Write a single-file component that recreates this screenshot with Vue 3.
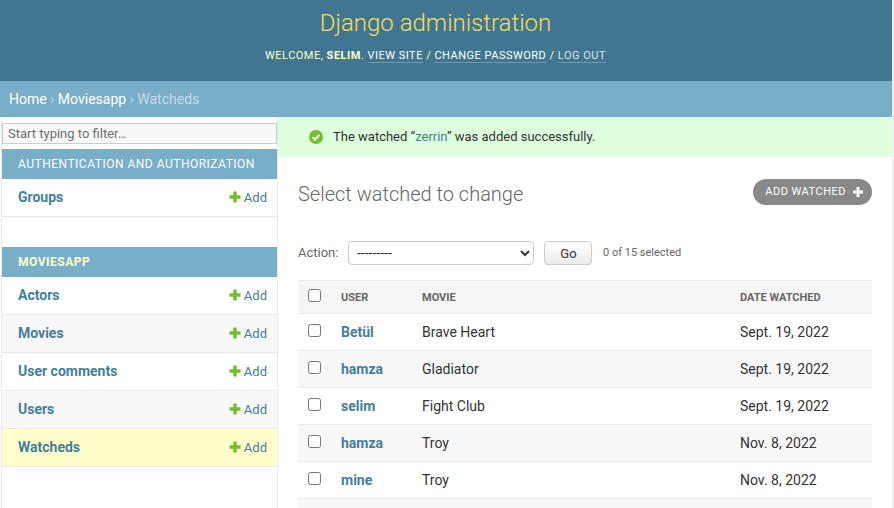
<script setup>
const appsA = ['Groups']
const appsB = ['Actors', 'Movies', 'User comments', 'Users', 'Watcheds']
const rows = [
  { user: 'Betül', movie: 'Brave Heart', date: 'Sept. 19, 2022' },
  { user: 'hamza', movie: 'Gladiator', date: 'Sept. 19, 2022' },
  { user: 'selim', movie: 'Fight Club', date: 'Sept. 19, 2022' },
  { user: 'hamza', movie: 'Troy', date: 'Nov. 8, 2022' },
  { user: 'mine', movie: 'Troy', date: 'Nov. 8, 2022' }
]
</script>

<template>
  <div class="page">
    <header class="header">
      <h1 class="brand">Django administration</h1>
      <div class="tools">
        WELCOME, <strong>SELIM</strong>.
        <a class="tool">VIEW SITE</a> /
        <a class="tool">CHANGE PASSWORD</a> /
        <a class="tool dim">LOG OUT</a>
      </div>
    </header>
    <nav class="crumbs">
      <a>Home</a><span class="sep"> › </span><a>Moviesapp</a><span class="sep"> › </span><span class="here">Watcheds</span>
    </nav>
    <div class="body">
      <aside class="side">
        <input class="filter" placeholder="Start typing to filter…" />
        <div class="caption">AUTHENTICATION AND AUTHORIZATION</div>
        <div v-for="a in appsA" :key="a" class="app">
          <a class="app-name">{{ a }}</a>
          <a class="add">
            <svg class="plus" viewBox="0 0 12 12"><path d="M4.300 0.500h3.400v3.800h3.800v3.400H7.700v3.800H4.300V7.700H0.500V4.300h3.800z" fill="#70bf2b" /></svg>Add
          </a>
        </div>
        <div class="caption second"><strong>MOVIESAPP</strong></div>
        <div
          v-for="(a, i) in appsB"
          :key="a"
          class="app"
          :class="{ even: i % 2 === 1, current: a === 'Watcheds' }"
        >
          <a class="app-name">{{ a }}</a>
          <a class="add">
            <svg class="plus" viewBox="0 0 12 12"><path d="M4.300 0.500h3.400v3.800h3.800v3.400H7.700v3.800H4.300V7.700H0.500V4.300h3.800z" fill="#70bf2b" /></svg>Add
          </a>
        </div>
      </aside>
      <main class="main">
        <div class="message">
          <svg class="ok" viewBox="0 0 14 14">
            <circle cx="7" cy="7" r="7" fill="#70bf2b" />
            <path d="M3.600 7.200l2.400 2.400 4.400-4.600" fill="none" stroke="#fff" stroke-width="2" />
          </svg>
          <span>The watched “<a class="msg-link">zerrin</a>” was added successfully.</span>
        </div>
        <section class="content">
          <div class="title-row">
            <h2 class="title">Select watched to change</h2>
            <a class="add-btn">ADD WATCHED
              <svg class="btn-plus" viewBox="0 0 12 12"><path d="M4.500 1h3v3.500h3.500v3H7.500v3.500h-3V7.500H1v-3h3.500z" fill="#fff" /></svg>
            </a>
          </div>
          <div class="actions">
            <label class="action-label">Action:</label>
            <select class="action-select"><option>---------</option></select>
            <button class="go">Go</button>
            <span class="count">0 of 15 selected</span>
          </div>
          <table class="table">
            <thead>
              <tr>
                <th class="c-check"><input type="checkbox" class="check" /></th>
                <th class="c-user">USER</th>
                <th class="c-movie">MOVIE</th>
                <th>DATE WATCHED</th>
              </tr>
            </thead>
            <tbody>
              <tr v-for="(r, i) in rows" :key="i" :class="{ even: i % 2 === 1 }">
                <td class="c-check"><input type="checkbox" class="check" /></td>
                <td class="c-user"><a class="user">{{ r.user }}</a></td>
                <td class="c-movie">{{ r.movie }}</td>
                <td>{{ r.date }}</td>
              </tr>
              <tr class="even"><td colspan="4"></td></tr>
            </tbody>
          </table>
        </section>
      </main>
    </div>
  </div>
</template>

<style>
html, body { margin: 0; overflow: hidden; background: #fff; }
</style>

<style scoped>
.page {
  width: 894px;
  height: 508px;
  box-sizing: border-box;
  border-right: 2px solid #eee;
  overflow: hidden;
  font-family: Roboto, "Liberation Sans", sans-serif;
  font-size: 14px;
  color: #333;
  background: #fff;
}
.header {
  height: 81px;
  box-sizing: border-box;
  background: #417690;
  color: #ffc;
  text-align: center;
  padding: 9px 21px 0 0;
}
.brand {
  margin: 0;
  font-size: 24px;
  line-height: 28px;
  font-weight: 300;
  color: #f5dd5d;
}
.tools {
  margin-top: 10px;
  font-size: 11px;
  line-height: 17px;
  letter-spacing: 0.5px;
  font-weight: 400;
}
.tools strong { font-weight: 700; }
.tool {
  color: #fff;
  border-bottom: 1px solid rgba(255, 255, 255, 0.25);
}
.tool.dim { color: #d6e4ec; }
.crumbs {
  height: 36px;
  box-sizing: border-box;
  padding: 10px 9px;
  line-height: 16px;
  background: #79aec8;
  color: #c4dce8;
  white-space: pre;
}
.crumbs a { color: #fff; }
.here { color: #c4dce8; }
.sep { color: #c4dce8; }
.body {
  display: grid;
  grid-template-columns: 278px 1fr;
  height: 391px;
}
.side {
  box-sizing: border-box;
  margin-left: 1px;
  padding-top: 6px;
  border-left: 1px solid #eaeaea;
  border-right: 1px solid #eaeaea;
}
.filter {
  display: block;
  box-sizing: border-box;
  width: 275px;
  height: 21px;
  margin: 0 0 5px;
  padding: 2px 5px;
  font: 13px Roboto, sans-serif;
  color: #333;
  background: #f8f8f8;
  border: 1px solid #ccc;
  outline: 0;
}
.filter::placeholder { color: #6f6f6f; opacity: 1; }
.caption {
  height: 30px;
  box-sizing: border-box;
  padding: 0 16px;
  line-height: 30px;
  font-size: 12px;
  letter-spacing: 0.5px;
  color: #fff;
  background: #79aec8;
}
.caption.second { margin-top: 30px; color: #ffc; }
.app {
  display: flex;
  justify-content: space-between;
  align-items: center;
  height: 38px;
  box-sizing: border-box;
  padding: 0 10px 2px 16px;
  background: #fff;
  border-bottom: 1px solid #eaeaea;
}
.app.even { background: #f8f8f8; }
.app.current { background: #ffc; }
.app-name {
  font-weight: 700;
  color: #447e9b;
}
.add {
  display: flex;
  align-items: center;
  padding-top: 2px;
  font-size: 13px;
  color: #447e9b;
}
.plus { width: 12px; height: 12px; margin: -2px 3px 0 0; }
.main { min-width: 0; }
.message {
  display: flex;
  align-items: center;
  height: 40px;
  box-sizing: border-box;
  padding: 0 0 1px 31px;
  background: #dfd;
  font-size: 13px;
}
.ok { width: 14px; height: 14px; margin-right: 10px; }
.msg-link { color: #447e9b; }
.content { padding: 22px 20px 0; }
.title-row {
  display: flex;
  justify-content: space-between;
  align-items: flex-start;
}
.title {
  margin: 0;
  font-size: 20px;
  line-height: 30px;
  font-weight: 300;
  color: #666;
}
.add-btn {
  display: flex;
  align-items: center;
  height: 26px;
  box-sizing: border-box;
  padding: 0 8px 2px 12px;
  border-radius: 15px;
  background: #888;
  color: #fff;
  font-size: 11px;
  letter-spacing: 0.5px;
  white-space: nowrap;
}
.btn-plus { width: 12px; height: 12px; margin-left: 6px; margin-top: 2px; }
.actions {
  display: flex;
  align-items: center;
  height: 26px;
  margin-top: 31px;
}
.action-label { font-size: 13px; color: #666; width: 50px; margin-top: -1px; }
.action-select {
  box-sizing: border-box;
  width: 186px;
  height: 24px;
  padding: 0 4px;
  font: 14px Roboto, sans-serif;
  color: #333;
  background: #fff;
  border: 1px solid #ccc;
  border-radius: 4px;
}
.go {
  box-sizing: border-box;
  width: 48px;
  height: 24px;
  margin: 0 11px 0 10px;
  padding: 0 0 0 1px;
  font: 13px Roboto, sans-serif;
  color: #333;
  background: linear-gradient(#fff, #ececec);
  border: 1px solid #ccc;
  border-radius: 4px;
}
.count { font-size: 11px; color: #666; margin-top: -1px; }
.table {
  width: 574px;
  margin-top: 14px;
  border-collapse: collapse;
  table-layout: fixed;
}
th {
  height: 32px;
  padding: 0;
  text-align: left;
  font-size: 11px;
  font-weight: 700;
  color: #666;
  background: #f6f6f6;
  border-top: 1px solid #eaeaea;
  border-bottom: 1px solid #eaeaea;
}
td {
  height: 36px;
  padding: 0;
  border-bottom: 1px solid #eaeaea;
  font-size: 14px;
  color: #333;
}
tr.even td { background: #f8f8f8; }
.c-check { width: 43px; padding-left: 10px; box-sizing: border-box; }
.c-user { width: 81px; }
.c-movie { width: 318px; }
.check {
  display: block;
  width: 13px;
  height: 13px;
  margin: 0 0 4px;
}
.user { font-weight: 700; color: #447e9b; }
</style>
